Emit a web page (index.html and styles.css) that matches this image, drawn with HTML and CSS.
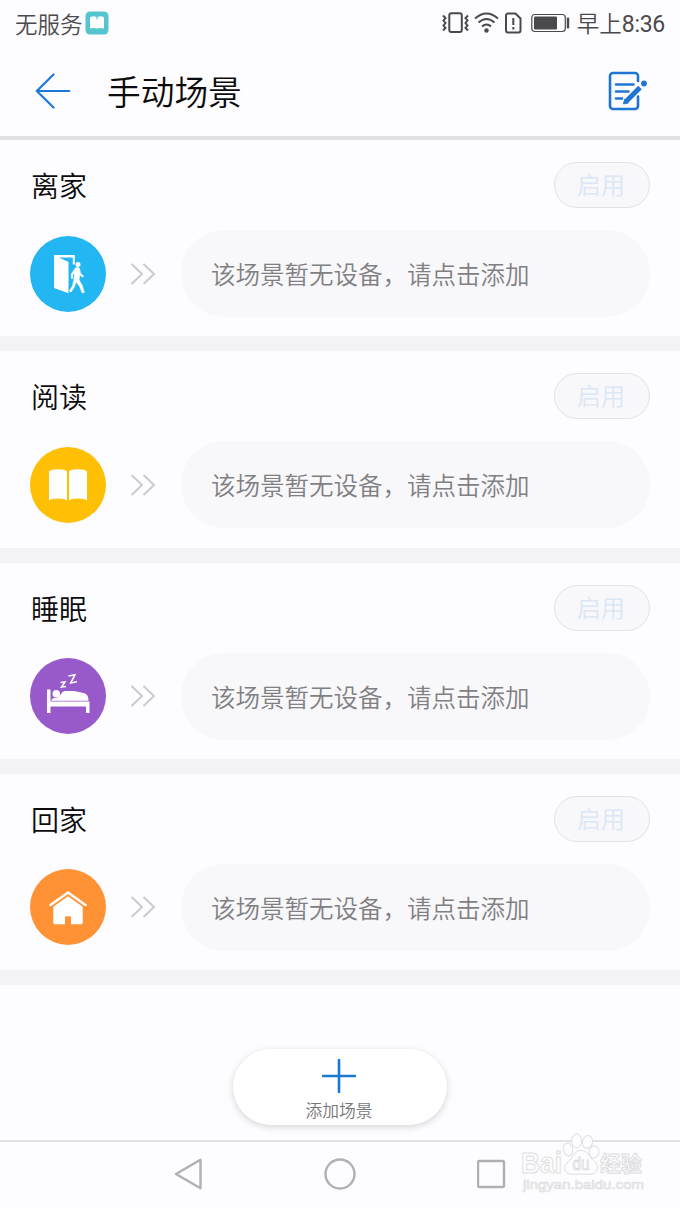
FILE: index.html
```
<!DOCTYPE html>
<html lang="zh-CN">

<head>
    <meta charset="UTF-8">
    <meta name="viewport" content="width=device-width, initial-scale=1.0">
    <title>手动场景</title>
    <link rel="stylesheet" href="styles.css">
</head>

<body>
    <!-- Status bar -->
    <div class="statusbar">
        <div class="carrier">
            <span>无服务</span>
            <svg width="24" height="24" viewBox="0 0 24 24">
                <rect x="0.5" y="0.5" width="23" height="23" rx="4.5" fill="#54c5cf"/>
                <path d="M5 6.5q3.5-2.5 7 0q3.5-2.5 7 0v11q-3.5-1-7 0q-3.5-1-7 0z" fill="#fff"/>
                <path d="M12 4.5v4" stroke="#54c5cf" stroke-width="1"/>
            </svg>
        </div>
        <div class="status-icons">
            <svg class="vibrate" width="27" height="22" viewBox="0 0 27 22" fill="none" stroke="#4b494d" stroke-width="2">
                <rect x="7.3" y="1.3" width="12.5" height="18.8" rx="2"/>
                <path d="M1 3.5l2.5 2.5l-2 2.5l2 2.5l-2 2.5l2 2.5l-2.5 2.5M26 3.5l-2.5 2.5l2 2.5l-2 2.5l2 2.5l-2 2.5l2.5 2.5"/>
            </svg>
            <svg class="wifi" width="25" height="22" viewBox="0 0 25 22" fill="none" stroke="#4b494d" stroke-width="2">
                <path d="M1 6.5q11.5-10 23 0M4.5 10.5q8-7 16 0M8 14.5q4.500-4 9 0"/>
                <circle cx="12.5" cy="18.5" r="2.2" fill="#4b494d" stroke="none"/>
            </svg>
            <svg class="sim" width="17" height="22" viewBox="0 0 17 22" fill="none" stroke="#4b494d" stroke-width="2">
                <path d="M3 1.5h7.5l5 5v12a2 2 0 0 1-2 2h-10.500a2 2 0 0 1-2-2v-15a2 2 0 0 1 2-2z"/>
                <path d="M8.3 6v7M8.3 15v2.5"/>
            </svg>
            <svg class="battery" width="39" height="20" viewBox="0 0 39 20">
                <rect x="0.8" y="1.5" width="33.5" height="17" rx="3" fill="none" stroke="#4b494d" stroke-width="1.2"/>
                <rect x="3" y="3.5" width="23" height="13" rx="1" fill="#4b494d"/>
                <rect x="35.8" y="4.5" width="2.4" height="11" rx="1" fill="#4b494d"/>
            </svg>
            <span>早上<span class="time">8:36</span></span>
        </div>
    </div>

    <!-- Title bar -->
    <header>
        <svg width="36" height="36" viewBox="0 0 36 36" fill="none" stroke="#1b79dc" stroke-width="2.2" stroke-linecap="round" stroke-linejoin="round">
            <path d="M18.5 1.5L1.8 18l16.7 16.5M1.8 18h32.5"/>
        </svg>
        <h1>手动场景</h1>
        <svg class="edit" width="40" height="40" viewBox="0 0 40 40" fill="none" stroke="#1f75d6" stroke-width="2.6" stroke-linecap="round">
            <path d="M30 10v-5a3 3 0 0 0-3-3h-22a3 3 0 0 0-3 3v30a3 3 0 0 0 3 3h22a3 3 0 0 0 3-3v-9.500"/>
            <path d="M8 13.5h17.5M8 20.5h12.5M8 27.5h6"/>
            <path d="M32 16.5L18 30.500" stroke-width="5" stroke-linecap="butt"/>
            <path d="M16.5 28.500l-1 4.500l4.500-1z" fill="#1f75d6" stroke-width="1" stroke-linejoin="round"/>
            <circle cx="36" cy="12.500" r="2.900" fill="#1f75d6" stroke="none"/>
        </svg>
    </header>

    <main>
        <section class="scene">
            <div class="scene-head">
                <h2>离家</h2>
                <button>启用</button>
            </div>
            <div class="scene-row">
                <div class="icon leave">
                    <svg width="76" height="76" viewBox="0 0 76 76" fill="#fff">
                        <path d="M24 19h20.800v9.500h-2v-7H29l9.500 4.500v31.300L24 52z"/>
                        <circle cx="48" cy="28.400" r="2.500"/>
                        <path d="M45.500 31.800q2.500-1.200 4 .5l1.300 5.200l2.900 2.400l-.8 1.300l-3.200-2l-.5 4.800l3.200 5.500l2 7l-2.300.5l-2.600-6.500l-3.500-4.500l-1.200 4.500l-3.800 5.800l-1.700-1.300l3.200-5.200l1.600-8l.2-5l-1.500 2.200v3.500h-1.500l-.1-4.500z" stroke="#fff" stroke-width="0.4"/>
                    </svg>
                </div>
                <svg class="arrows" width="26" height="24" viewBox="0 0 26 24">
                    <path d="M1.500 2l10.500 10l-10.500 10M13.500 2l10.500 10l-10.500 10"/>
                </svg>
                <div class="device">该场景暂无设备，请点击添加</div>
            </div>
        </section>

        <section class="scene">
            <div class="scene-head">
                <h2>阅读</h2>
                <button>启用</button>
            </div>
            <div class="scene-row">
                <div class="icon read">
                    <svg width="76" height="76" viewBox="0 0 76 76" fill="#fff">
                        <path d="M19 24.500q2-2.300 9-2.300t9 2.300v29q-2-2-9-2t-9 2zM39 24.500q2-2.300 9-2.300t9 2.300v29q-2-2-9-2t-9 2z"/>
                    </svg>
                </div>
                <svg class="arrows" width="26" height="24" viewBox="0 0 26 24">
                    <path d="M1.500 2l10.500 10l-10.500 10M13.500 2l10.500 10l-10.500 10"/>
                </svg>
                <div class="device">该场景暂无设备，请点击添加</div>
            </div>
        </section>

        <section class="scene">
            <div class="scene-head">
                <h2>睡眠</h2>
                <button>启用</button>
            </div>
            <div class="scene-row">
                <div class="icon sleep">
                    <svg width="76" height="76" viewBox="0 0 76 76" fill="#fff">
                        <path d="M17 31.500h3.500v12H59.500v11.500h-3.500v-6.500H20.500v6.500H17z"/>
                        <circle cx="26.300" cy="35.800" r="3.800"/>
                        <path d="M21 42.700q1-3 4-2.700q4 0 6-4q1.500-3 4-3h9q7 1 11 2.500q3.500 1.500 3.500 7.200z"/>
                        <path d="M30.500 24.500l4.500-.5l-3.500 5l4.500-.5M38.500 18l6.500-1.300l-4.300 8.300l6.300-1.300" fill="none" stroke="#fff" stroke-width="1.500"/>
                    </svg>
                </div>
                <svg class="arrows" width="26" height="24" viewBox="0 0 26 24">
                    <path d="M1.500 2l10.500 10l-10.500 10M13.500 2l10.500 10l-10.500 10"/>
                </svg>
                <div class="device">该场景暂无设备，请点击添加</div>
            </div>
        </section>

        <section class="scene">
            <div class="scene-head">
                <h2>回家</h2>
                <button>启用</button>
            </div>
            <div class="scene-row">
                <div class="icon home">
                    <svg width="76" height="76" viewBox="0 0 76 76" fill="#fff">
                        <path d="M20.500 36L38 23.500L55.500 36" fill="none" stroke="#fff" stroke-width="2.600" stroke-linecap="round" stroke-linejoin="round"/>
                        <path d="M23.300 37.700L38 27.300l14.700 10.400v16a1.500 1.500 0 0 1-1.500 1.500H41v-7a1 1 0 0 0-1-1h-4a1 1 0 0 0-1 1v7H24.800a1.500 1.500 0 0 1-1.500-1.500z"/>
                    </svg>
                </div>
                <svg class="arrows" width="26" height="24" viewBox="0 0 26 24">
                    <path d="M1.500 2l10.500 10l-10.500 10M13.500 2l10.500 10l-10.500 10"/>
                </svg>
                <div class="device">该场景暂无设备，请点击添加</div>
            </div>
        </section>
    </main>

    <div class="add-area">
        <div class="add">
            <svg width="34" height="34" viewBox="0 0 34 34">
                <path d="M17 1v32M1 17h32" stroke="#1b79d2" stroke-width="2.600" stroke-linecap="round"/>
            </svg>
            <span>添加场景</span>
        </div>
    </div>

    <!-- System navigation -->
    <nav>
        <svg width="30" height="34" viewBox="0 0 30 34">
            <path d="M27.500 2.800v28.400L3 17z"/>
        </svg>
        <svg width="34" height="34" viewBox="0 0 34 34">
            <circle cx="17" cy="17" r="14.500"/>
        </svg>
        <svg width="30" height="34" viewBox="0 0 30 34">
            <rect x="1" y="4" width="26" height="26" rx="1.500"/>
        </svg>
    </nav>

    <svg class="watermark" width="140" height="66" viewBox="0 0 140 66">
        <g class="paw">
            <ellipse cx="55.500" cy="11" rx="5" ry="7"/>
            <ellipse cx="66.500" cy="12" rx="5" ry="6.500" transform="rotate(12 66.500 12)"/>
            <ellipse cx="47" cy="19.500" rx="4.600" ry="6.500" transform="rotate(-12 47 19.500)"/>
            <ellipse cx="73" cy="22" rx="5" ry="6.200" transform="rotate(10 73 22)"/>
            <path d="M60 20.500c6 0 8 5 11 8.500c4 4 7 6.500 5 11c-2.500 6-9 4-16 4s-14 2-16-4c-1.500-4.500 2-7 6-11c3-4 4-8.500 10-8.500z"/>
        </g>
        <text class="wm-big" x="0" y="43" textLength="41" lengthAdjust="spacingAndGlyphs">Bai</text>
        <text class="wm-du" x="51.500" y="40" textLength="17" lengthAdjust="spacingAndGlyphs">du</text>
        <text class="wm-cn" x="79" y="41" textLength="42">经验</text>
        <text class="wm-url" x="2" y="59" textLength="121" lengthAdjust="spacingAndGlyphs">jingyan.baidu.com</text>
    </svg>
</body>

</html>
```
FILE: styles.css
```
* {
    box-sizing: border-box;
}

body {
    position: relative;
    display: flex;
    flex-direction: column;
    height: 1208px;
    margin: 0;
    overflow: hidden;
    background-color: #fdfcfe;
    font-family: "Noto Sans CJK SC", sans-serif;
    font-weight: 350;
}

svg {
    display: block;
    flex: none;
}

.statusbar {
    display: flex;
    justify-content: space-between;
    align-items: center;
    height: 46px;
    padding: 0 15px;
    color: #4b494d;
    font-size: 22.5px;
    line-height: 46px;
}

.time {
    font-family: Roboto, sans-serif;
    font-size: 23px;
    font-weight: 400;
    letter-spacing: -0.3px;
}

.carrier,
.status-icons {
    display: flex;
    align-items: center;
}

.carrier {
    gap: 2px;
}

.wifi {
    margin-left: 5px;
}

.sim {
    margin-left: 6px;
}

.battery {
    margin: 0 7px 0 9px;
}

header {
    display: flex;
    align-items: center;
    height: 94px;
    padding: 0 32px 0 35px;
    border-bottom: 4px solid #e2e0e3;
}

h1 {
    flex: 1;
    margin: 0 0 0 36px;
    color: #0c0c0c;
    font-size: 33.7px;
    font-weight: 350;
    line-height: 50px;
}

.scene {
    height: 211.33px;
    padding: 22px 30.5px 0 30px;
    border-bottom: 15px solid #f3f2f5;
}

.scene-head {
    display: flex;
    justify-content: space-between;
    align-items: center;
    height: 46px;
}

h2 {
    margin: 0 0 0 1px;
    color: #0c0c0c;
    font-size: 28px;
    font-weight: 350;
    line-height: 44px;
}

button {
    width: 96px;
    height: 46px;
    padding: 0 1px 2px 0;
    border: 1px solid #e3e2e5;
    border-radius: 23px;
    background-color: #f8f7fa;
    color: #dbe7f5;
    font-family: inherit;
    font-size: 24px;
    font-weight: 350;
    line-height: 42px;
}

.scene-row {
    display: flex;
    align-items: center;
    margin-top: 22px;
}

.icon {
    width: 76px;
    height: 76px;
    border-radius: 50%;
}

.leave {
    background-color: #22b6f3;
}

.read {
    background-color: #ffbf05;
}

.sleep {
    background-color: #985aca;
}

.home {
    background-color: #ff9234;
}

.arrows {
    margin: 0 25px 0 24px;
    fill: none;
    stroke: #cbcacd;
    stroke-width: 2;
}

.device {
    flex: 1;
    height: 87px;
    padding-left: 30px;
    border-radius: 44px;
    background-color: #f8f7fa;
    color: #807f82;
    font-size: 24.5px;
    line-height: 87px;
}

.add-area {
    display: flex;
    flex: 1;
    justify-content: center;
    align-items: flex-end;
    padding-bottom: 15px;
}

.add {
    display: flex;
    flex-direction: column;
    align-items: center;
    width: 214px;
    height: 76px;
    padding: 10px 2px 0 0;
    border-radius: 38px;
    background-color: #fff;
    box-shadow: 0 2px 7px rgba(0, 0, 0, 0.16);
    color: #77767a;
    font-size: 16.8px;
    line-height: 24px;
}

.add span {
    margin-top: 5px;
}

nav {
    display: flex;
    justify-content: center;
    align-items: center;
    gap: 120px;
    height: 68px;
    padding: 0 1px 2px 0;
    border-top: 2px solid #e2e1e4;
}

nav svg {
    fill: none;
    stroke: #b0afb2;
    stroke-width: 2.4;
    stroke-linejoin: round;
}

/* Watermark lies over the navigation bar */
.watermark {
    position: absolute;
    right: 19px;
    bottom: 12px;
    fill: #fdfcfe;
    stroke: #dddce0;
    stroke-width: 1;
}

.watermark text {
    font-family: "Liberation Sans", "Noto Sans CJK SC", sans-serif;
    font-weight: bold;
}

.wm-big {
    font-size: 29px;
}

.watermark .wm-du {
    font-size: 18px;
    font-weight: normal;
}

.wm-cn {
    font-size: 21px;
}

.watermark .wm-url {
    font-size: 13px;
    font-weight: normal;
    stroke-width: 0.7;
}
```
